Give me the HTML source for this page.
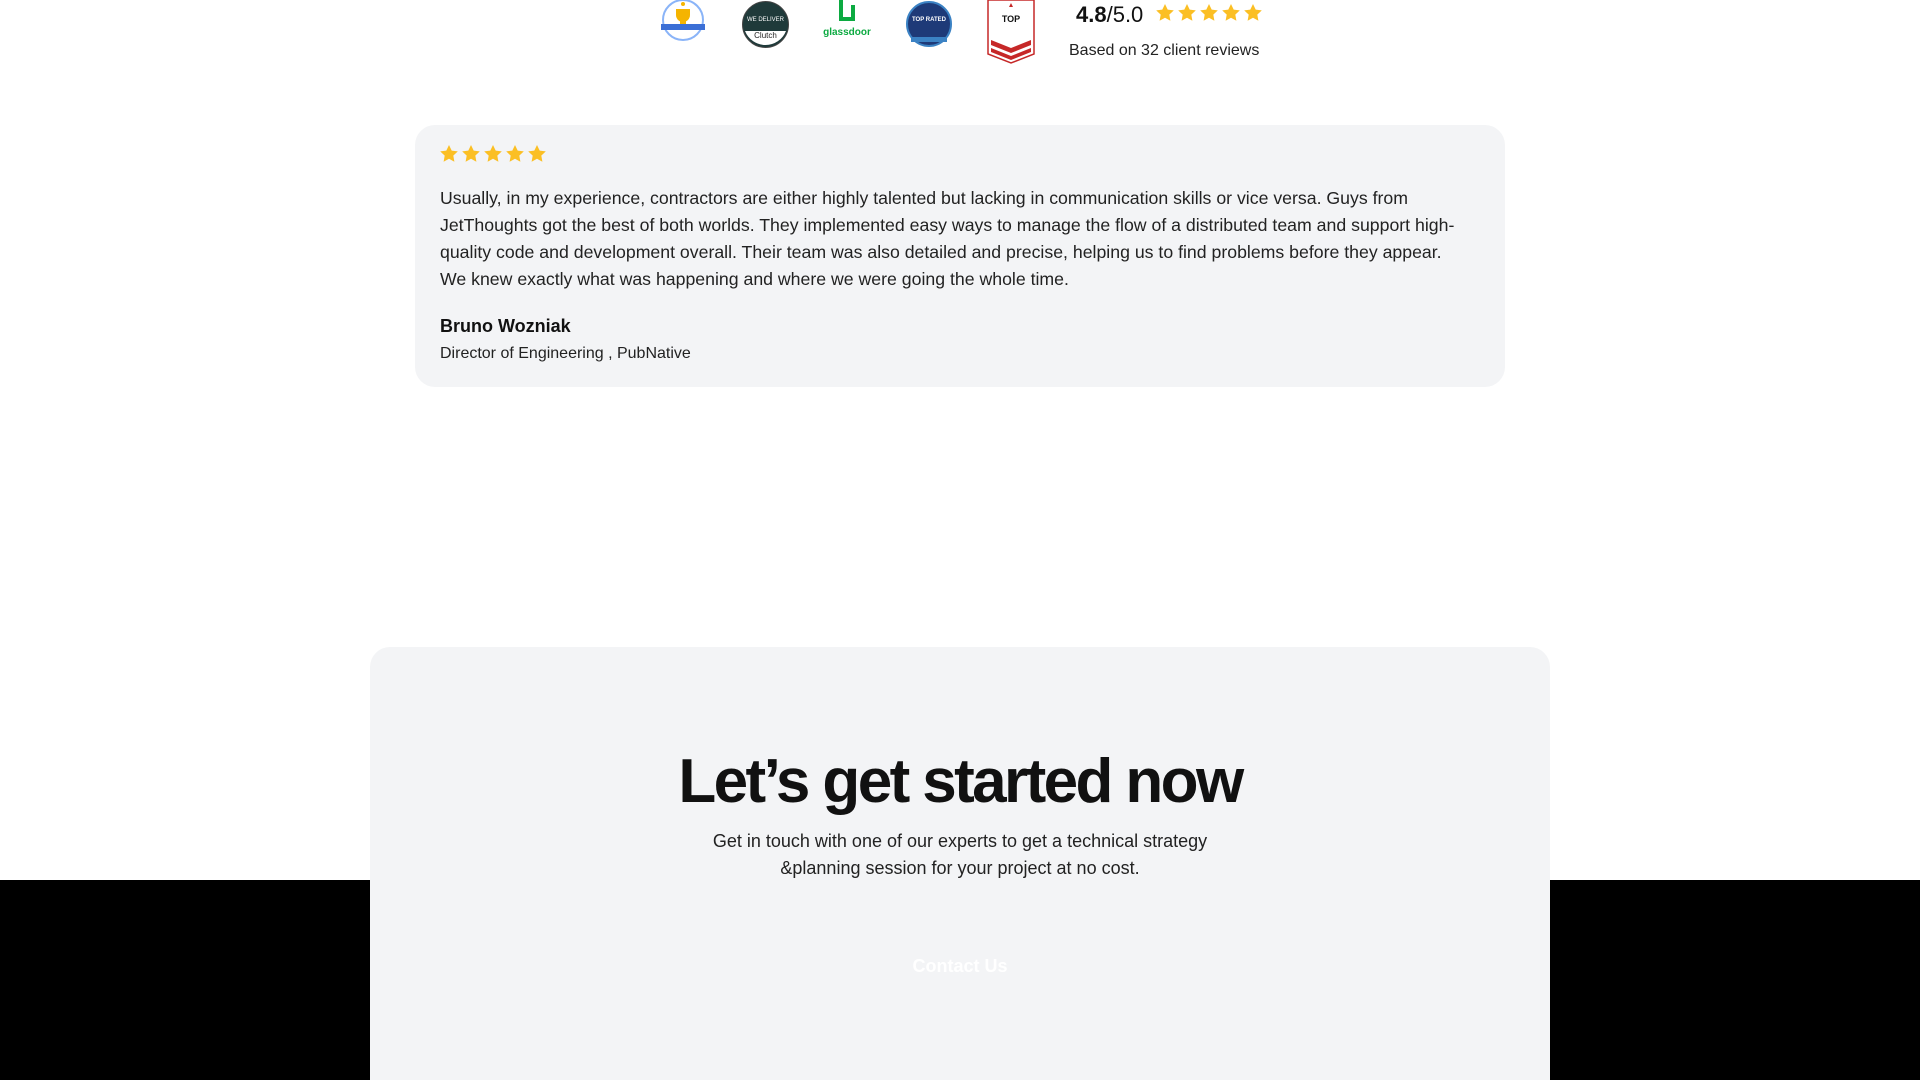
<!DOCTYPE html>
<html><head><meta charset="utf-8"><style>
*{margin:0;padding:0;box-sizing:border-box}
html,body{width:1920px;height:1080px;overflow:hidden}
body{background:#fff;font-family:"Liberation Sans",Arial,sans-serif;color:#111;position:relative}
.abs{position:absolute}
</style></head><body>
<svg width="0" height="0" style="position:absolute"><defs><path id="st" d="M10 1l2.7 5.6 6.1.8-4.5 4.2 1.1 6.1L10 14.8 4.6 17.7l1.1-6.1L1.2 7.4l6.1-.8z" fill="#fbbf24"/></defs></svg>
<div class="abs" style="left:0;top:880px;width:1920px;height:200px;background:#000"></div>

<!-- badges -->
<svg class="abs" style="left:658px;top:0" width="50" height="45" viewBox="0 0 50 45"><circle cx="25" cy="20" r="20" fill="#fff" stroke="#8ab4f8" stroke-width="2"/><path d="M18 9h14v6a7 7 0 0 1-14 0z" fill="#f5b400"/><rect x="22" y="21" width="6" height="4" fill="#f5b400"/><rect x="3" y="24" width="44" height="6" fill="#3b6fd6"/><circle cx="25" cy="4" r="2" fill="#f5b400"/></svg>
<svg class="abs" style="left:741px;top:0" width="49" height="49" viewBox="0 0 49 49"><circle cx="24.5" cy="24.5" r="23" fill="#1f3a3a" stroke="#444" stroke-width="1"/><text x="24.5" y="21" font-size="6" fill="#fff" text-anchor="middle" font-family="Liberation Sans">WE DELIVER</text><path d="M4 31h41a22 22 0 0 1-41 0z" fill="#fff"/><text x="24.5" y="38" font-size="8" fill="#222" text-anchor="middle" font-family="Liberation Sans">Clutch</text></svg>
<svg class="abs" style="left:820px;top:0" width="54" height="40" viewBox="0 0 54 40"><path d="M21 0v19h12V5" fill="none" stroke="#0caa41" stroke-width="4"/><text x="27" y="35" font-size="10" fill="#0caa41" text-anchor="middle" font-weight="bold" font-family="Liberation Sans">glassdoor</text></svg>
<svg class="abs" style="left:905px;top:0" width="48" height="48" viewBox="0 0 48 48"><circle cx="24" cy="24" r="22" fill="#1e3a78" stroke="#3b82c4" stroke-width="2"/><text x="24" y="21" font-size="6" fill="#fff" text-anchor="middle" font-weight="bold" font-family="Liberation Sans">TOP RATED</text><rect x="6" y="37" width="36" height="5" fill="#3b82c4"/></svg>
<svg class="abs" style="left:987px;top:0" width="48" height="64" viewBox="0 0 48 64"><path d="M1 0h46v54l-23 9-23-9z" fill="#fff" stroke="#c62828" stroke-width="1.5"/><text x="24" y="22" font-size="9" fill="#111" text-anchor="middle" font-weight="bold" font-family="Liberation Sans">TOP</text><path d="M4 40l20 8 20-8v5l-20 8-20-8zM4 48l20 8 20-8v4l-20 8-20-8z" fill="#c62828"/><path d="M24 3l2 4h-4z" fill="#c62828"/></svg>

<div class="abs" style="left:1076px;top:2px;font-size:22px;line-height:26px"><b>4.8</b>/5.0</div>
<svg class="abs" style="left:1155px;top:3px" width="110" height="20" viewBox="0 0 110 20"><use href="#st"/><use href="#st" x="22"/><use href="#st" x="44"/><use href="#st" x="66"/><use href="#st" x="88"/></svg>
<div class="abs" style="left:1069px;top:42px;font-size:16px;color:#222">Based on 32 client reviews</div>

<!-- review card -->
<div class="abs" style="left:415px;top:125px;width:1090px;height:262px;background:#f3f4f6;border-radius:20px"></div>
<svg class="abs" style="left:439px;top:144px" width="110" height="20" viewBox="0 0 110 20"><use href="#st"/><use href="#st" x="22"/><use href="#st" x="44"/><use href="#st" x="66"/><use href="#st" x="88"/></svg>
<div class="abs" style="left:440px;top:185px;font-size:17.7px;line-height:27px;color:#222;white-space:nowrap">Usually, in my experience, contractors are either highly talented but lacking in communication skills or vice versa. Guys from<br>JetThoughts got the best of both worlds. They implemented easy ways to manage the flow of a distributed team and support high-<br>quality code and development overall. Their team was also detailed and precise, helping us to find problems before they appear.<br>We knew exactly what was happening and where we were going the whole time.</div>
<div class="abs" style="left:440px;top:316px;font-size:18px;font-weight:bold">Bruno Wozniak</div>
<div class="abs" style="left:440px;top:345px;font-size:16px;color:#222">Director of Engineering , PubNative</div>

<!-- CTA -->
<div class="abs" style="left:370px;top:647px;width:1180px;height:433px;background:#f3f4f6;border-radius:20px 20px 0 0"></div>
<div class="abs" style="left:370px;top:744px;width:1180px;text-align:center;font-size:62px;font-weight:bold;letter-spacing:-2.6px;line-height:76px;color:#111">Let’s get started now</div>
<div class="abs" style="left:370px;top:828px;width:1180px;text-align:center;font-size:18px;line-height:27px;color:#222">Get in touch with one of our experts to get a technical strategy<br>&amp;planning session for your project at no cost.</div>
<div class="abs" style="left:370px;top:956px;width:1180px;text-align:center;font-size:18px;font-weight:bold;color:#fff">Contact Us</div>
</body></html>
